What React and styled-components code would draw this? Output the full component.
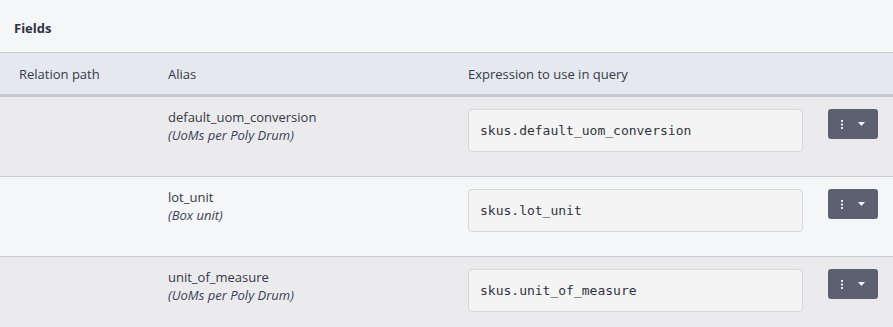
import React from "react";
import styled, { createGlobalStyle } from "styled-components";

const Global = createGlobalStyle`
  html, body { margin: 0; padding: 0; background: #f5f6f8; }
  body { font-family: "Open Sans", "Noto Sans", sans-serif; color: #333845; }
`;

const Panel = styled.div`
  width: 893px;
  background: #f5f6f8;
`;

const Title = styled.div`
  height: 52px;
  box-sizing: border-box;
  padding: 19px 14px 0;
  font-size: 13px;
  font-weight: 700;
  line-height: 18px;
  color: #2f3340;
`;

const Grid = styled.div`
  display: grid;
  grid-template-columns: 149px 300px 360px 1fr;
`;

const HeadRow = styled(Grid)`
  height: 45px;
  box-sizing: border-box;
  background: #e6e8ef;
  border-top: 1px solid #c9cbd3;
  border-bottom: 3px solid #c8c9cf;
  align-items: center;
`;

const HeadCell = styled.div`
  padding-left: 19px;
  font-size: 13px;
  line-height: 18px;
  color: #343a48;
`;

const Row = styled(Grid)`
  background: ${(p) => (p.$alt ? "#f5f6f8" : "#ebebed")};
  border-bottom: 1px solid #cbccd3;
  padding: 12px 0 24px;
  min-height: 43px;
`;

const Cell = styled.div`
  padding-left: 19px;
`;

const AliasText = styled.div`
  display: flex;
  flex-direction: column;
  margin-top: -1px;
`;

const AliasName = styled.div`
  font-size: 13px;
  line-height: 18px;
  color: #333845;
`;

const AliasNote = styled.div`
  font-size: 13px;
  line-height: 18px;
  font-style: italic;
  color: #3a3f55;
`;

const Expr = styled.div`
  width: 335px;
  height: 43px;
  box-sizing: border-box;
  border: 1px solid #d6d6d8;
  border-radius: 4px;
  background: #f4f4f4;
  padding: 0 11px;
  display: flex;
  align-items: center;
  font-family: "DejaVu Sans Mono", monospace;
  font-size: 13px;
  color: #2f3340;
`;

const MenuButton = styled.div`
  width: 50px;
  height: 30px;
  box-sizing: border-box;
  background: #5c6071;
  border-radius: 3px;
  display: flex;
  align-items: center;
  justify-content: center;
  gap: 15px;
  margin-left: 19px;
`;

const Kebab = () => (
  <svg width="2" height="9" viewBox="0 0 2 9">
    <rect x="0" y="0" width="2" height="2" fill="#e8ecf4" />
    <rect x="0" y="3.5" width="2" height="2" fill="#e8ecf4" />
    <rect x="0" y="7" width="2" height="2" fill="#e8ecf4" />
  </svg>
);

const Caret = () => (
  <svg width="7" height="4" viewBox="0 0 7 4">
    <path d="M0 0 L7 0 L3.5 4 Z" fill="#f2f3f6" />
  </svg>
);

const rows = [
  { name: "default_uom_conversion", note: "(UoMs per Poly Drum)", expr: "skus.default_uom_conversion" },
  { name: "lot_unit", note: "(Box unit)", expr: "skus.lot_unit" },
  { name: "unit_of_measure", note: "(UoMs per Poly Drum)", expr: "skus.unit_of_measure" },
];

export default function App() {
  return (
    <>
      <Global />
      <Panel>
        <Title>Fields</Title>
        <HeadRow>
          <HeadCell>Relation path</HeadCell>
          <HeadCell>Alias</HeadCell>
          <HeadCell>Expression to use in query</HeadCell>
          <HeadCell />
        </HeadRow>
        {rows.map((r, i) => (
          <Row key={r.name} $alt={i % 2 === 1}>
            <Cell />
            <Cell>
              <AliasText>
                <AliasName>{r.name}</AliasName>
                <AliasNote>{r.note}</AliasNote>
              </AliasText>
            </Cell>
            <Cell>
              <Expr>{r.expr}</Expr>
            </Cell>
            <div>
              <MenuButton>
                <Kebab />
                <Caret />
              </MenuButton>
            </div>
          </Row>
        ))}
      </Panel>
    </>
  );
}
